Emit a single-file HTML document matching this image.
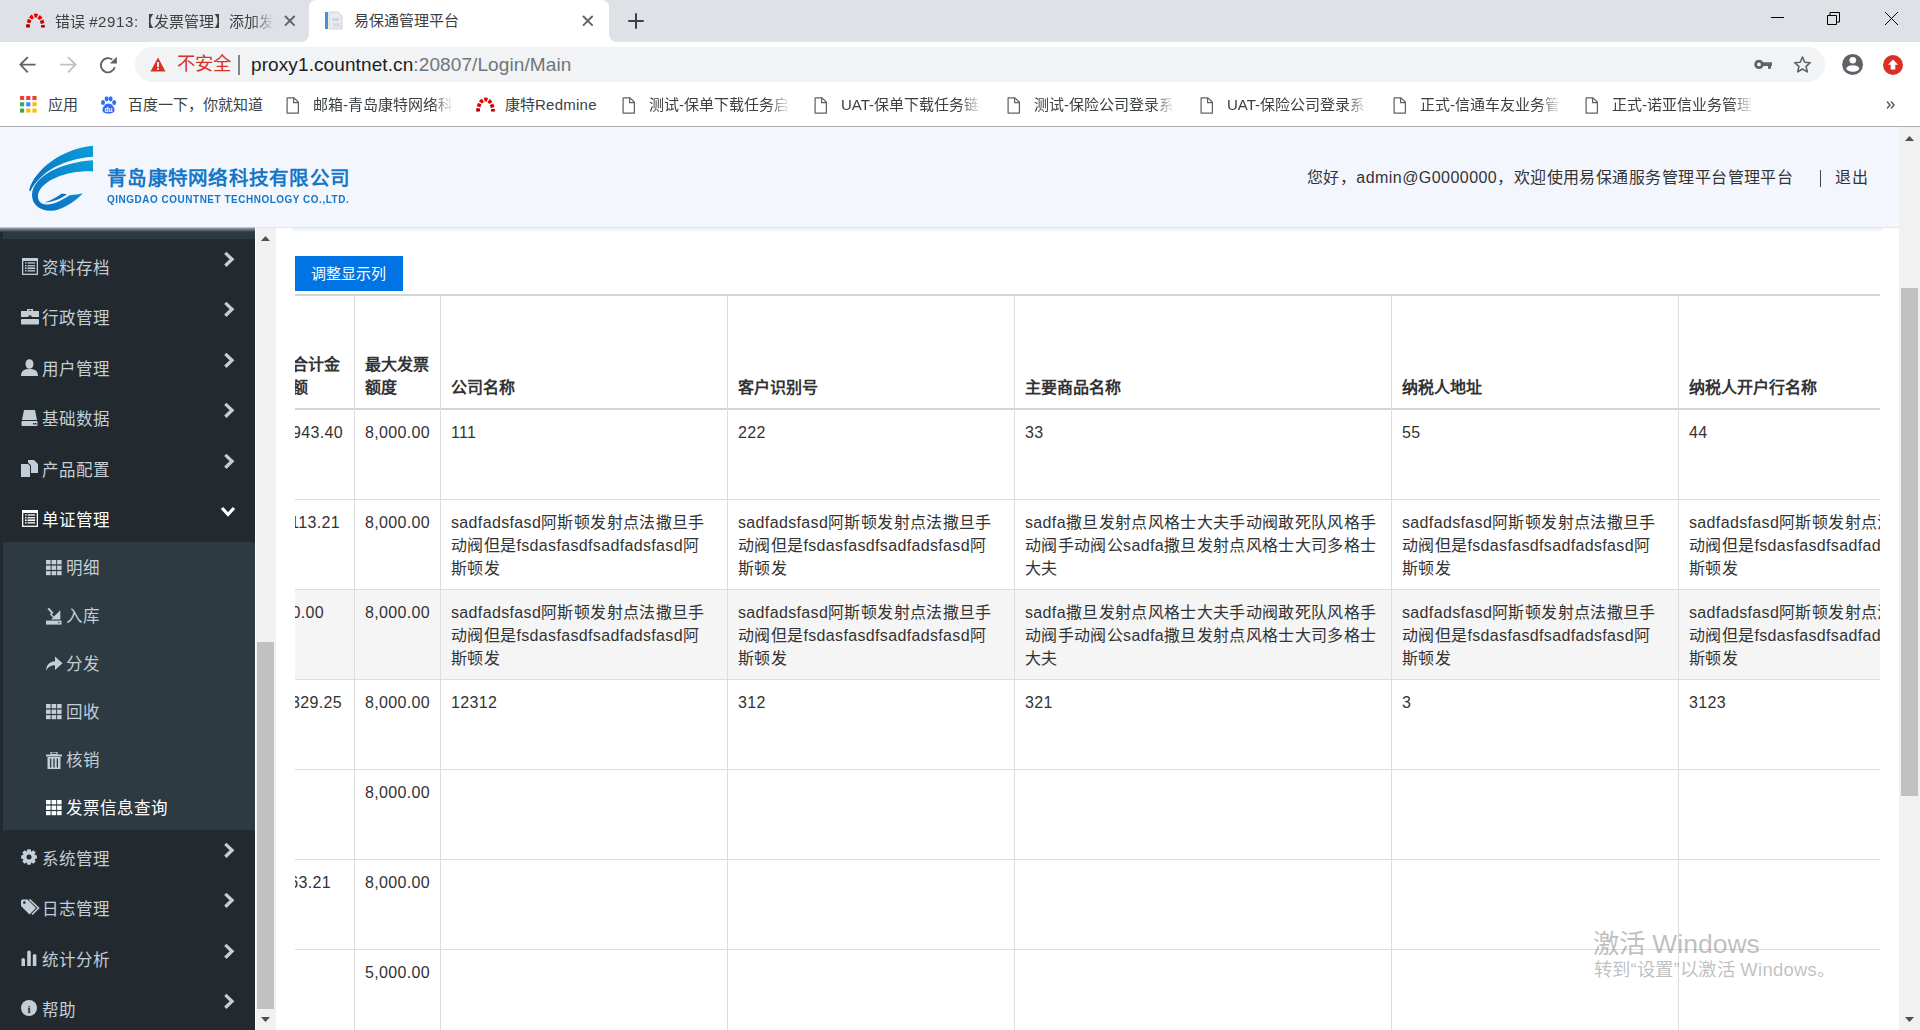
<!DOCTYPE html><html lang="zh-CN"><head><meta charset="utf-8"><style>
*{margin:0;padding:0;box-sizing:border-box}
html,body{width:1920px;height:1030px;overflow:hidden;background:#fff;font-family:"Liberation Sans",sans-serif;position:relative}
.a{position:absolute}
.t{position:absolute;white-space:nowrap;line-height:1}
.fade{-webkit-mask-image:linear-gradient(to right,#000 0,#000 calc(100% - 22px),transparent 100%);mask-image:linear-gradient(to right,#000 0,#000 calc(100% - 22px),transparent 100%);overflow:hidden}
.side{color:#c3ced6;font-size:16px}
.cell{position:absolute;font-size:16px;line-height:23px;color:#333;white-space:nowrap;letter-spacing:0.35px}
.th{position:absolute;font-size:16px;line-height:23px;color:#333;font-weight:bold;white-space:nowrap}
</style></head><body><div class="a" style="left:0;top:0;width:1920px;height:42px;background:#dee1e6"></div><svg class="a" style="left:300px;top:0" width="326" height="42" viewBox="0 0 326 42"><path d="M0 42 Q9 42 9 33 L9 8 Q9 0 17 0 L301 0 Q309 0 309 8 L309 33 Q309 42 318 42 Z" fill="#fff"/></svg><svg class="a" style="left:25px;top:13px" width="21" height="15" viewBox="0 0 21 15"><defs><linearGradient id="rg" x1="0" y1="0" x2="0" y2="1"><stop offset="0" stop-color="#e80000"/><stop offset="0.6" stop-color="#d00000"/><stop offset="1" stop-color="#990000"/></linearGradient></defs><path d="M3 14.5 A7.5 12 0 0 1 18 14.5" fill="none" stroke="url(#rg)" stroke-width="3.8" stroke-dasharray="3.3 1.4"/></svg><div class="t fade" style="left:55px;top:14px;width:219px;font-size:15px;color:#3c4043">错误 <span style="letter-spacing:0.6px">#2913:</span>【发票管理】添加发票</div><svg class="a" style="left:284.2px;top:15.2px" width="11.6" height="11.6"><path d="M1.5 1.5 L10.1 10.1 M10.1 1.5 L1.5 10.1" stroke="#5f6368" stroke-width="1.9" stroke-linecap="round"/></svg><svg class="a" style="left:324px;top:11px" width="20" height="20" viewBox="0 0 20 20"><rect x="1" y="1" width="3" height="17" fill="#4a90d0"/><path d="M5 1 L14 1 L18 5 L18 18 L5 18 Z" fill="#e8ecef" stroke="#c8ccd0" stroke-width="0.8"/><rect x="8" y="7" width="7" height="3" fill="#d0d6dc"/><rect x="9" y="12" width="7" height="4" fill="#d8dde2"/></svg><div class="t" style="left:354px;top:13px;font-size:15px;color:#3c4043">易保通管理平台</div><svg class="a" style="left:582.2px;top:15.2px" width="11.6" height="11.6"><path d="M1.5 1.5 L10.1 10.1 M10.1 1.5 L1.5 10.1" stroke="#5f6368" stroke-width="1.9" stroke-linecap="round"/></svg><svg class="a" style="left:628px;top:13px" width="16" height="16"><path d="M8 1 V15 M1 8 H15" stroke="#3c4043" stroke-width="2" stroke-linecap="round"/></svg><div class="a" style="left:1771px;top:17px;width:13px;height:1px;background:#000"></div><svg class="a" style="left:1827px;top:12px" width="14" height="14"><path d="M0.5 3.5 H9.5 V12.5 H0.5 Z M3 3.5 V0.5 H12.5 V10 H9.5" fill="none" stroke="#000" stroke-width="1"/></svg><svg class="a" style="left:1885px;top:12px" width="13" height="13"><path d="M0 0 L13 13 M13 0 L0 13" stroke="#000" stroke-width="1"/></svg><div class="a" style="left:135px;top:47px;width:1690px;height:35px;background:#f1f3f4;border-radius:17.5px"></div><svg class="a" style="left:18px;top:54px" width="20" height="20" viewBox="0 0 20 20"><path d="M17.6 10.6 H2.6 M9.8 3.1 L2.4 10.6 L9.8 18.3" fill="none" stroke="#5f6368" stroke-width="1.9"/></svg><svg class="a" style="left:58px;top:54px" width="20" height="20" viewBox="0 0 20 20"><path d="M2.3 10.6 H17.3 M10.1 3.1 L17.5 10.6 L10.1 18.3" fill="none" stroke="#bdc1c6" stroke-width="1.9"/></svg><svg class="a" style="left:98px;top:54px" width="20" height="20" viewBox="0 0 20 20"><path d="M16.8 13.3 A7.1 7.1 0 1 1 14.3 5.6" fill="none" stroke="#5f6368" stroke-width="1.9"/><path d="M11.8 9.4 L18.9 9.4 L18.9 2.8 Z" fill="#5f6368"/></svg><svg class="a" style="left:150px;top:57px" width="16" height="15" viewBox="0 0 16 15"><path d="M8 0.5 L15.5 14.5 H0.5 Z" fill="#d93025"/><rect x="7.1" y="5" width="1.8" height="5" fill="#fff"/><rect x="7.1" y="11" width="1.8" height="1.8" fill="#fff"/></svg><div class="t" style="left:177px;top:55px;font-size:18.4px;color:#d93025">不安全</div><div class="a" style="left:238px;top:55px;width:2px;height:20px;background:#80868b"></div><div class="t" style="left:251px;top:55px;font-size:19px;color:#202124;letter-spacing:0.1px">proxy1.countnet.cn<span style="color:#70757a">:20807/Login/Main</span></div><svg class="a" style="left:1753px;top:57px" width="20" height="16" viewBox="0 0 20 16"><circle cx="5.96" cy="7.4" r="3.3" fill="none" stroke="#5f6368" stroke-width="2.8"/><path d="M9 5.3 H18.9 V9.1 H18 V11.8 H15 V9.1 H9 Z" fill="#5f6368"/></svg><svg class="a" style="left:1793px;top:55px" width="19" height="19" viewBox="0 0 24 24"><path d="M12 2.5 L14.8 9.1 L21.9 9.7 L16.5 14.4 L18.1 21.4 L12 17.7 L5.9 21.4 L7.5 14.4 L2.1 9.7 L9.2 9.1 Z" fill="none" stroke="#5f6368" stroke-width="2" stroke-linejoin="round"/></svg><svg class="a" style="left:1842px;top:54px" width="22" height="22" viewBox="0 0 22 22"><circle cx="10.6" cy="10.5" r="10.45" fill="#5f6368"/><circle cx="10.8" cy="6.3" r="3.3" fill="#fff"/><ellipse cx="10.8" cy="14.5" rx="6.4" ry="3.3" fill="#fff"/></svg><svg class="a" style="left:1883px;top:55px" width="20" height="20" viewBox="0 0 20 20"><circle cx="10" cy="10" r="10" fill="#d93025"/><path d="M10 4.5 L15 9.8 H12.3 V14.5 H7.7 V9.8 H5 Z" fill="#fff"/></svg><svg class="a" style="left:20px;top:96px" width="17" height="17"><rect x="0.0" y="0.0" width="4.2" height="4" fill="#ea4335"/><rect x="6.2" y="0.0" width="4.2" height="4" fill="#ea4335"/><rect x="12.4" y="0.0" width="4.2" height="4" fill="#ea4335"/><rect x="0.0" y="6.3" width="4.2" height="4" fill="#34a853"/><rect x="6.2" y="6.3" width="4.2" height="4" fill="#4285f4"/><rect x="12.4" y="6.3" width="4.2" height="4" fill="#fbbc04"/><rect x="0.0" y="12.6" width="4.2" height="4" fill="#34a853"/><rect x="6.2" y="12.6" width="4.2" height="4" fill="#fbbc04"/><rect x="12.4" y="12.6" width="4.2" height="4" fill="#fbbc04"/></svg><div class="t" style="left:48px;top:97px;font-size:15px;color:#3c4043">应用</div><svg class="a" style="left:100px;top:96px" width="17" height="18" viewBox="0 0 17 18"><ellipse cx="3" cy="6.5" rx="2" ry="2.6" fill="#2f6ef0"/><ellipse cx="6.6" cy="2.8" rx="2" ry="2.6" fill="#2f6ef0"/><ellipse cx="10.6" cy="2.8" rx="2" ry="2.6" fill="#2f6ef0"/><ellipse cx="14.2" cy="6.5" rx="2" ry="2.6" fill="#2f6ef0"/><path d="M8.5 7.5 C5 7.5 3 11 2.5 13 C2 16 4 17.5 8.5 17.5 C13 17.5 15 16 14.5 13 C14 11 12 7.5 8.5 7.5Z" fill="#2f6ef0"/><text x="8.5" y="15.6" font-size="6.5" font-family="Liberation Sans" font-weight="bold" fill="#fff" text-anchor="middle">du</text></svg><div class="t" style="left:128px;top:97px;font-size:15px;color:#3c4043">百度一下，你就知道</div><svg class="a" style="left:286px;top:97px" width="14" height="17" viewBox="0 0 14 17"><path d="M1.1 0.9 H8 L12.4 5.3 V16.1 H1.1 Z M7.6 0.9 V5.7 H12.4" fill="none" stroke="#5f6368" stroke-width="1.25" stroke-linejoin="round"/></svg><div class="t fade" style="left:313px;top:97px;width:141px;font-size:15px;color:#3c4043">邮箱-青岛康特网络科技</div><svg class="a" style="left:475px;top:97px" width="21" height="15" viewBox="0 0 21 15"><defs><linearGradient id="rg" x1="0" y1="0" x2="0" y2="1"><stop offset="0" stop-color="#e80000"/><stop offset="0.6" stop-color="#d00000"/><stop offset="1" stop-color="#990000"/></linearGradient></defs><path d="M3 14.5 A7.5 12 0 0 1 18 14.5" fill="none" stroke="url(#rg)" stroke-width="3.8" stroke-dasharray="3.3 1.4"/></svg><div class="t" style="left:505px;top:97px;font-size:15px;color:#3c4043">康特<span style="letter-spacing:0.25px">Redmine</span></div><svg class="a" style="left:622px;top:97px" width="14" height="17" viewBox="0 0 14 17"><path d="M1.1 0.9 H8 L12.4 5.3 V16.1 H1.1 Z M7.6 0.9 V5.7 H12.4" fill="none" stroke="#5f6368" stroke-width="1.25" stroke-linejoin="round"/></svg><div class="t fade" style="left:649px;top:97px;width:141px;font-size:15px;color:#3c4043">测试-保单下载任务启动</div><svg class="a" style="left:814px;top:97px" width="14" height="17" viewBox="0 0 14 17"><path d="M1.1 0.9 H8 L12.4 5.3 V16.1 H1.1 Z M7.6 0.9 V5.7 H12.4" fill="none" stroke="#5f6368" stroke-width="1.25" stroke-linejoin="round"/></svg><div class="t fade" style="left:841px;top:97px;width:141px;font-size:15px;color:#3c4043">UAT-保单下载任务链接</div><svg class="a" style="left:1007px;top:97px" width="14" height="17" viewBox="0 0 14 17"><path d="M1.1 0.9 H8 L12.4 5.3 V16.1 H1.1 Z M7.6 0.9 V5.7 H12.4" fill="none" stroke="#5f6368" stroke-width="1.25" stroke-linejoin="round"/></svg><div class="t fade" style="left:1034px;top:97px;width:141px;font-size:15px;color:#3c4043">测试-保险公司登录系统</div><svg class="a" style="left:1200px;top:97px" width="14" height="17" viewBox="0 0 14 17"><path d="M1.1 0.9 H8 L12.4 5.3 V16.1 H1.1 Z M7.6 0.9 V5.7 H12.4" fill="none" stroke="#5f6368" stroke-width="1.25" stroke-linejoin="round"/></svg><div class="t fade" style="left:1227px;top:97px;width:141px;font-size:15px;color:#3c4043">UAT-保险公司登录系统</div><svg class="a" style="left:1393px;top:97px" width="14" height="17" viewBox="0 0 14 17"><path d="M1.1 0.9 H8 L12.4 5.3 V16.1 H1.1 Z M7.6 0.9 V5.7 H12.4" fill="none" stroke="#5f6368" stroke-width="1.25" stroke-linejoin="round"/></svg><div class="t fade" style="left:1420px;top:97px;width:141px;font-size:15px;color:#3c4043">正式-信通车友业务管理</div><svg class="a" style="left:1585px;top:97px" width="14" height="17" viewBox="0 0 14 17"><path d="M1.1 0.9 H8 L12.4 5.3 V16.1 H1.1 Z M7.6 0.9 V5.7 H12.4" fill="none" stroke="#5f6368" stroke-width="1.25" stroke-linejoin="round"/></svg><div class="t fade" style="left:1612px;top:97px;width:141px;font-size:15px;color:#3c4043">正式-诺亚信业务管理系统</div><svg class="a" style="left:1886px;top:100px" width="10" height="10" viewBox="0 0 10 10"><path d="M1 1.5 L4 5 L1 8.5 M5 1.5 L8 5 L5 8.5" fill="none" stroke="#5f6368" stroke-width="1.6"/></svg><div class="a" style="left:0;top:126px;width:1920px;height:1px;background:#a9acb0"></div><div class="a" style="left:0;top:127px;width:1899px;height:101px;background:#f3f7fd"></div><svg class="a" style="left:20px;top:140px" width="100" height="80" viewBox="0 0 1288 1030"><defs><linearGradient id="lg" x1="0" y1="1" x2="1" y2="0"><stop offset="0" stop-color="#0b6cc0"/><stop offset="1" stop-color="#0a9ed8"/></linearGradient></defs><path d="M940 75 L940 215 C700 230 300 330 130 665 L118 640 C200 380 520 120 940 75 Z" fill="url(#lg)"/><path d="M940 262 L940 405 C640 390 300 500 235 690 C215 780 270 840 360 830 C470 820 560 760 640 712 C700 700 760 700 812 685 C700 800 530 910 400 912 C250 915 150 830 155 700 C170 470 520 290 940 262 Z" fill="url(#lg)"/><path d="M315 805 C400 780 480 730 540 690 L605 698 C520 760 420 800 315 805 Z" fill="#0b74c8"/></svg><div class="t" style="left:107px;top:169px;font-size:19.5px;font-weight:bold;color:#1676c8;letter-spacing:0.27px">青岛康特网络科技有限公司</div><div class="t" style="left:107px;top:194px;font-size:11.5px;font-weight:bold;color:#1676c8;letter-spacing:0.62px;transform:scaleX(0.865);transform-origin:0 0">QINGDAO COUNTNET TECHNOLOGY CO.,LTD.</div><div class="t" style="left:1307px;top:170px;font-size:16px;color:#333;letter-spacing:0.45px">您好，admin@G0000000，欢迎使用易保通服务管理平台管理平台</div><div class="a" style="left:1820px;top:170px;width:1px;height:17px;background:#444"></div><div class="t" style="left:1835px;top:170px;font-size:16px;color:#333;letter-spacing:0.5px">退出</div><div class="a" style="left:0;top:227px;width:1899px;height:1px;background:#e4e8ed"></div><div class="a" style="left:292px;top:228px;width:1590px;height:4px;background:linear-gradient(#eaeff6,#f3f6fb 60%,#fff);border-radius:0 0 6px 6px"></div><div class="a" style="left:0;top:228px;width:255px;height:802px;background:#222a30"></div><div class="a" style="left:3px;top:231px;width:252px;height:8px;background:#2b3940"></div><div class="a" style="left:0;top:227px;width:255px;height:5px;background:linear-gradient(#e0e0e0,#8a9095 30%,#2b3940)"></div><div class="a" style="left:3px;top:542px;width:252px;height:288px;background:#2d3a41"></div><svg class="a" style="left:22px;top:258px" width="16" height="17" viewBox="0 0 16 17"><rect x="0.65" y="0.5" width="14.7" height="15.8" fill="none" stroke="#c3ced6" stroke-width="1.3"/><rect x="0" y="0" width="16" height="3" fill="#c3ced6"/><rect x="3" y="4.3" width="1.6" height="1.3" fill="#c3ced6"/><rect x="5.5" y="4.3" width="7.6" height="1.3" fill="#c3ced6"/><rect x="3" y="7.1" width="1.6" height="1.3" fill="#c3ced6"/><rect x="5.5" y="7.1" width="7.6" height="1.3" fill="#c3ced6"/><rect x="3" y="9.4" width="1.6" height="1.7" fill="#c3ced6"/><rect x="5.5" y="9.4" width="7.6" height="1.7" fill="#c3ced6"/><rect x="3" y="12.2" width="1.6" height="1.3" fill="#c3ced6"/><rect x="5.5" y="12.2" width="7.6" height="1.3" fill="#c3ced6"/></svg><div class="t" style="left:41.5px;top:260px;font-size:16.5px;font-weight:500;color:#c3ced6">资料存档</div><svg class="a" style="left:223px;top:251px" width="12" height="16" viewBox="0 0 12 16"><path d="M2.3 1.9 L9 8.3 L2.3 14.7" fill="none" stroke="#c3ced6" stroke-width="3.3"/></svg><svg class="a" style="left:21px;top:308px" width="18" height="17" viewBox="0 0 18 17"><path d="M6 3 V1 H12 V3 H18 V9 H0 V3 Z M7.5 3 H10.5 V2.2 H7.5 Z" fill="#c3ced6" fill-rule="evenodd"/><rect x="0" y="11" width="18" height="5.5" rx="1" fill="#c3ced6"/><rect x="7.5" y="7.5" width="3" height="3" fill="#222a30"/></svg><div class="t" style="left:41.5px;top:310px;font-size:16.5px;font-weight:500;color:#c3ced6">行政管理</div><svg class="a" style="left:223px;top:301px" width="12" height="16" viewBox="0 0 12 16"><path d="M2.3 1.9 L9 8.3 L2.3 14.7" fill="none" stroke="#c3ced6" stroke-width="3.3"/></svg><svg class="a" style="left:21px;top:359px" width="17" height="17" viewBox="0 0 17 17"><ellipse cx="8.5" cy="5" rx="4" ry="4.8" fill="#c3ced6"/><path d="M0 17 C0 11 4 10 8.5 10 C13 10 17 11 17 17 Z" fill="#c3ced6"/></svg><div class="t" style="left:41.5px;top:361px;font-size:16.5px;font-weight:500;color:#c3ced6">用户管理</div><svg class="a" style="left:223px;top:352px" width="12" height="16" viewBox="0 0 12 16"><path d="M2.3 1.9 L9 8.3 L2.3 14.7" fill="none" stroke="#c3ced6" stroke-width="3.3"/></svg><svg class="a" style="left:21px;top:409px" width="17" height="17" viewBox="0 0 17 17"><path d="M3 1 H14 L16 11 H1 Z" fill="#c3ced6"/><rect x="0.5" y="12" width="16" height="5" rx="1" fill="#c3ced6"/><rect x="12" y="14" width="1.5" height="1.5" fill="#222a30"/><rect x="14" y="14" width="1.5" height="1.5" fill="#222a30"/></svg><div class="t" style="left:41.5px;top:411px;font-size:16.5px;font-weight:500;color:#c3ced6">基础数据</div><svg class="a" style="left:223px;top:402px" width="12" height="16" viewBox="0 0 12 16"><path d="M2.3 1.9 L9 8.3 L2.3 14.7" fill="none" stroke="#c3ced6" stroke-width="3.3"/></svg><svg class="a" style="left:21px;top:460px" width="17" height="17" viewBox="0 0 17 17"><path d="M0 4 H7 L9 6 V17 H0 Z" fill="#c3ced6"/><path d="M7 0 H13 L17 4 V13 H10 V5.5 L7 2.5 Z" fill="#c3ced6"/></svg><div class="t" style="left:41.5px;top:462px;font-size:16.5px;font-weight:500;color:#c3ced6">产品配置</div><svg class="a" style="left:223px;top:453px" width="12" height="16" viewBox="0 0 12 16"><path d="M2.3 1.9 L9 8.3 L2.3 14.7" fill="none" stroke="#c3ced6" stroke-width="3.3"/></svg><svg class="a" style="left:22px;top:510px" width="16" height="17" viewBox="0 0 16 17"><rect x="0.65" y="0.5" width="14.7" height="15.8" fill="none" stroke="#fff" stroke-width="1.3"/><rect x="0" y="0" width="16" height="3" fill="#fff"/><rect x="3" y="4.3" width="1.6" height="1.3" fill="#fff"/><rect x="5.5" y="4.3" width="7.6" height="1.3" fill="#fff"/><rect x="3" y="7.1" width="1.6" height="1.3" fill="#fff"/><rect x="5.5" y="7.1" width="7.6" height="1.3" fill="#fff"/><rect x="3" y="9.4" width="1.6" height="1.7" fill="#fff"/><rect x="5.5" y="9.4" width="7.6" height="1.7" fill="#fff"/><rect x="3" y="12.2" width="1.6" height="1.3" fill="#fff"/><rect x="5.5" y="12.2" width="7.6" height="1.3" fill="#fff"/></svg><div class="t" style="left:41.5px;top:512px;font-size:16.5px;font-weight:500;color:#fff">单证管理</div><svg class="a" style="left:220px;top:506px" width="16" height="12" viewBox="0 0 16 12"><path d="M2 2 L8 8.5 L14 2" fill="none" stroke="#fff" stroke-width="3.2"/></svg><svg class="a" style="left:46px;top:560px" width="16" height="16" viewBox="0 0 16 16"><rect x="0" y="0" width="4.6" height="4.3" fill="#c3ced6"/><rect x="5.6" y="0" width="4.6" height="4.3" fill="#c3ced6"/><rect x="11.1" y="0" width="4.5" height="4.3" fill="#c3ced6"/><rect x="0" y="5.6" width="4.6" height="4.3" fill="#c3ced6"/><rect x="5.6" y="5.6" width="4.6" height="4.3" fill="#c3ced6"/><rect x="11.1" y="5.6" width="4.5" height="4.3" fill="#c3ced6"/><rect x="0" y="11.1" width="4.6" height="4.1" fill="#c3ced6"/><rect x="5.6" y="11.1" width="4.6" height="4.1" fill="#c3ced6"/><rect x="11.1" y="11.1" width="4.5" height="4.1" fill="#c3ced6"/></svg><div class="t" style="left:66px;top:560px;font-size:16.5px;font-weight:500;color:#c3ced6">明细</div><svg class="a" style="left:46px;top:608px" width="16" height="17" viewBox="0 0 16 17"><path d="M1.5 0.8 L3 -0.2 L7.5 4.8 L6 6.2 Z" fill="#c3ced6"/><path d="M5 11.6 L14.3 11.6 L14.3 2.2 Z" fill="#c3ced6"/><path d="M4.8 5.2 L8.5 9 L7.5 10 L3.8 6.2 Z" fill="#c3ced6"/><rect x="0" y="12.6" width="15.5" height="4" fill="#c3ced6"/><rect x="12" y="14.2" width="1.6" height="1" fill="#2d3a41"/></svg><div class="t" style="left:66px;top:608px;font-size:16.5px;font-weight:500;color:#c3ced6">入库</div><svg class="a" style="left:46px;top:656px" width="17" height="15" viewBox="0 0 17 15"><path d="M0 14.5 C0.3 8.5 4 5.5 9 5.2 V0.5 L16.5 7.3 L9 14 V9.3 C5 9.3 2 11 0 14.5 Z" fill="#c3ced6"/></svg><div class="t" style="left:66px;top:656px;font-size:16.5px;font-weight:500;color:#c3ced6">分发</div><svg class="a" style="left:46px;top:704px" width="16" height="16" viewBox="0 0 16 16"><rect x="0" y="0" width="4.6" height="4.3" fill="#c3ced6"/><rect x="5.6" y="0" width="4.6" height="4.3" fill="#c3ced6"/><rect x="11.1" y="0" width="4.5" height="4.3" fill="#c3ced6"/><rect x="0" y="5.6" width="4.6" height="4.3" fill="#c3ced6"/><rect x="5.6" y="5.6" width="4.6" height="4.3" fill="#c3ced6"/><rect x="11.1" y="5.6" width="4.5" height="4.3" fill="#c3ced6"/><rect x="0" y="11.1" width="4.6" height="4.1" fill="#c3ced6"/><rect x="5.6" y="11.1" width="4.6" height="4.1" fill="#c3ced6"/><rect x="11.1" y="11.1" width="4.5" height="4.1" fill="#c3ced6"/></svg><div class="t" style="left:66px;top:704px;font-size:16.5px;font-weight:500;color:#c3ced6">回收</div><svg class="a" style="left:46px;top:752px" width="16" height="17" viewBox="0 0 16 17"><rect x="0" y="2.5" width="16" height="2" fill="#c3ced6"/><rect x="5" y="0" width="6" height="2.5" fill="none" stroke="#c3ced6" stroke-width="1.2"/><path d="M1.5 5 H14.5 V17 H1.5 Z" fill="#c3ced6"/><rect x="4" y="6.5" width="1.3" height="9" fill="#2d3a41"/><rect x="7.35" y="6.5" width="1.3" height="9" fill="#2d3a41"/><rect x="10.7" y="6.5" width="1.3" height="9" fill="#2d3a41"/></svg><div class="t" style="left:66px;top:752px;font-size:16.5px;font-weight:500;color:#c3ced6">核销</div><svg class="a" style="left:46px;top:800px" width="16" height="16" viewBox="0 0 16 16"><rect x="0" y="0" width="4.6" height="4.3" fill="#fff"/><rect x="5.6" y="0" width="4.6" height="4.3" fill="#fff"/><rect x="11.1" y="0" width="4.5" height="4.3" fill="#fff"/><rect x="0" y="5.6" width="4.6" height="4.3" fill="#fff"/><rect x="5.6" y="5.6" width="4.6" height="4.3" fill="#fff"/><rect x="11.1" y="5.6" width="4.5" height="4.3" fill="#fff"/><rect x="0" y="11.1" width="4.6" height="4.1" fill="#fff"/><rect x="5.6" y="11.1" width="4.6" height="4.1" fill="#fff"/><rect x="11.1" y="11.1" width="4.5" height="4.1" fill="#fff"/></svg><div class="t" style="left:66px;top:800px;font-size:16.5px;font-weight:500;color:#fff">发票信息查询</div><svg class="a" style="left:21px;top:849px" width="16" height="16" viewBox="0 0 16 16"><polygon points="13.71,5.85 15.84,6.41 15.84,9.59 13.71,10.15 13.56,10.52 14.67,12.42 12.42,14.67 10.52,13.56 10.15,13.71 9.59,15.84 6.41,15.84 5.85,13.71 5.48,13.56 3.58,14.67 1.33,12.42 2.44,10.52 2.29,10.15 0.16,9.59 0.16,6.41 2.29,5.85 2.44,5.48 1.33,3.58 3.58,1.33 5.48,2.44 5.85,2.29 6.41,0.16 9.59,0.16 10.15,2.29 10.52,2.44 12.42,1.33 14.67,3.58 13.56,5.48" fill="#c3ced6"/><circle cx="8" cy="8" r="2.5" fill="#222a30"/></svg><div class="t" style="left:41.5px;top:851px;font-size:16.5px;font-weight:500;color:#c3ced6">系统管理</div><svg class="a" style="left:223px;top:842px" width="12" height="16" viewBox="0 0 12 16"><path d="M2.3 1.9 L9 8.3 L2.3 14.7" fill="none" stroke="#c3ced6" stroke-width="3.3"/></svg><svg class="a" style="left:21px;top:899px" width="20" height="17" viewBox="0 0 20 17"><path d="M0 1.5 V7 L8.5 15.5 L15 9 L6.5 0.5 H1 Z" fill="#c3ced6"/><circle cx="3.3" cy="3.6" r="1.3" fill="#222a30"/><path d="M8.5 0.5 L17.5 9 L11 15.5" fill="none" stroke="#c3ced6" stroke-width="1.6"/></svg><div class="t" style="left:41.5px;top:901px;font-size:16.5px;font-weight:500;color:#c3ced6">日志管理</div><svg class="a" style="left:223px;top:892px" width="12" height="16" viewBox="0 0 12 16"><path d="M2.3 1.9 L9 8.3 L2.3 14.7" fill="none" stroke="#c3ced6" stroke-width="3.3"/></svg><svg class="a" style="left:21px;top:950px" width="17" height="16" viewBox="0 0 17 16"><path d="M0.5 16 V9.5 Q0.5 8 2.2 8 Q4 8 4 9.5 V16 Z" fill="#c3ced6"/><path d="M6.2 16 V2 Q6.2 0.5 8 0.5 Q9.8 0.5 9.8 2 V16 Z" fill="#c3ced6"/><path d="M11.8 16 V5.5 Q11.8 4 13.6 4 Q15.4 4 15.4 5.5 V16 Z" fill="#c3ced6"/></svg><div class="t" style="left:41.5px;top:952px;font-size:16.5px;font-weight:500;color:#c3ced6">统计分析</div><svg class="a" style="left:223px;top:943px" width="12" height="16" viewBox="0 0 12 16"><path d="M2.3 1.9 L9 8.3 L2.3 14.7" fill="none" stroke="#c3ced6" stroke-width="3.3"/></svg><svg class="a" style="left:21px;top:1000px" width="16" height="16" viewBox="0 0 16 16"><circle cx="8" cy="8" r="8" fill="#c3ced6"/><text x="8" y="12.5" font-size="11" font-weight="bold" font-family="Liberation Serif" fill="#222a30" text-anchor="middle">i</text></svg><div class="t" style="left:41.5px;top:1002px;font-size:16.5px;font-weight:500;color:#c3ced6">帮助</div><svg class="a" style="left:223px;top:993px" width="12" height="16" viewBox="0 0 12 16"><path d="M2.3 1.9 L9 8.3 L2.3 14.7" fill="none" stroke="#c3ced6" stroke-width="3.3"/></svg><div class="a" style="left:255px;top:228px;width:1px;height:802px;background:#fff"></div><div class="a" style="left:256px;top:228px;width:20px;height:802px;background:#f1f1f1"></div><svg class="a" style="left:261px;top:236px" width="9" height="5"><path d="M0 5 L4.5 0 L9 5 Z" fill="#505050"/></svg><div class="a" style="left:257px;top:642px;width:17px;height:367px;background:#c1c1c1"></div><svg class="a" style="left:261px;top:1017px" width="9" height="5"><path d="M0 0 L4.5 5 L9 0 Z" fill="#505050"/></svg><div class="a" style="left:295px;top:256px;width:108px;height:35px;background:#0074e4"></div><div class="t" style="left:311px;top:266px;font-size:15px;color:#fff">调整显示列</div><div class="a" style="left:295px;top:294px;width:1585px;height:2px;background:#d4d4d4"></div><div class="a" style="left:295px;top:408px;width:1585px;height:2px;background:#d4d4d4"></div><div class="a" style="left:295px;top:590px;width:1585px;height:89px;background:#f5f5f5"></div><div class="a" style="left:295px;top:499px;width:1585px;height:1px;background:#ddd"></div><div class="a" style="left:295px;top:589px;width:1585px;height:1px;background:#ddd"></div><div class="a" style="left:295px;top:679px;width:1585px;height:1px;background:#ddd"></div><div class="a" style="left:295px;top:769px;width:1585px;height:1px;background:#ddd"></div><div class="a" style="left:295px;top:859px;width:1585px;height:1px;background:#ddd"></div><div class="a" style="left:295px;top:949px;width:1585px;height:1px;background:#ddd"></div><div class="a" style="left:354px;top:296px;width:1px;height:734px;background:#ddd"></div><div class="a" style="left:440px;top:296px;width:1px;height:734px;background:#ddd"></div><div class="a" style="left:727px;top:296px;width:1px;height:734px;background:#ddd"></div><div class="a" style="left:1014px;top:296px;width:1px;height:734px;background:#ddd"></div><div class="a" style="left:1391px;top:296px;width:1px;height:734px;background:#ddd"></div><div class="a" style="left:1678px;top:296px;width:1px;height:734px;background:#ddd"></div><div class="th" style="left:365px;top:353px">最大发票<br>额度</div><div class="th" style="left:451px;top:376px">公司名称</div><div class="th" style="left:738px;top:376px">客户识别号</div><div class="th" style="left:1025px;top:376px">主要商品名称</div><div class="th" style="left:1402px;top:376px">纳税人地址</div><div class="th" style="left:1689px;top:376px">纳税人开户行名称</div><div class="a" style="left:295px;top:296px;width:59px;height:112px;overflow:hidden"><div class="th" style="left:-3px;top:57px">合计金<br>额</div></div><div class="a" style="left:295px;top:410px;width:59px;height:620px;overflow:hidden"><div class="cell" style="right:11px;top:11px">1,943.40</div><div class="cell" style="right:14px;top:101px">1,113.21</div><div class="cell" style="right:30px;top:191px">10.00</div><div class="cell" style="right:12px;top:281px">1,329.25</div><div class="cell" style="right:23px;top:461px">1,063.21</div></div><div class="cell" style="left:365px;top:421px">8,000.00</div><div class="cell" style="left:365px;top:511px">8,000.00</div><div class="cell" style="left:365px;top:601px">8,000.00</div><div class="cell" style="left:365px;top:691px">8,000.00</div><div class="cell" style="left:365px;top:781px">8,000.00</div><div class="cell" style="left:365px;top:871px">8,000.00</div><div class="cell" style="left:365px;top:961px">5,000.00</div><div class="cell" style="left:451px;top:421px">111</div><div class="cell" style="left:738px;top:421px">222</div><div class="cell" style="left:1025px;top:421px">33</div><div class="cell" style="left:1402px;top:421px">55</div><div class="cell" style="left:1689px;top:421px">44</div><div class="cell" style="left:451px;top:691px">12312</div><div class="cell" style="left:738px;top:691px">312</div><div class="cell" style="left:1025px;top:691px">321</div><div class="cell" style="left:1402px;top:691px">3</div><div class="cell" style="left:1689px;top:691px">3123</div><div class="cell" style="left:451px;top:511px">sadfadsfasd阿斯顿发射点法撒旦手<br>动阀但是fsdasfasdfsadfadsfasd阿<br>斯顿发</div><div class="cell" style="left:738px;top:511px">sadfadsfasd阿斯顿发射点法撒旦手<br>动阀但是fsdasfasdfsadfadsfasd阿<br>斯顿发</div><div class="cell" style="left:1025px;top:511px">sadfa撒旦发射点风格士大夫手动阀敢死队风格手<br>动阀手动阀公sadfa撒旦发射点风格士大司多格士<br>大夫</div><div class="cell" style="left:1402px;top:511px">sadfadsfasd阿斯顿发射点法撒旦手<br>动阀但是fsdasfasdfsadfadsfasd阿<br>斯顿发</div><div class="cell" style="left:1689px;top:511px">sadfadsfasd阿斯顿发射点法撒旦手<br>动阀但是fsdasfasdfsadfadsfasd阿<br>斯顿发</div><div class="cell" style="left:451px;top:601px">sadfadsfasd阿斯顿发射点法撒旦手<br>动阀但是fsdasfasdfsadfadsfasd阿<br>斯顿发</div><div class="cell" style="left:738px;top:601px">sadfadsfasd阿斯顿发射点法撒旦手<br>动阀但是fsdasfasdfsadfadsfasd阿<br>斯顿发</div><div class="cell" style="left:1025px;top:601px">sadfa撒旦发射点风格士大夫手动阀敢死队风格手<br>动阀手动阀公sadfa撒旦发射点风格士大司多格士<br>大夫</div><div class="cell" style="left:1402px;top:601px">sadfadsfasd阿斯顿发射点法撒旦手<br>动阀但是fsdasfasdfsadfadsfasd阿<br>斯顿发</div><div class="cell" style="left:1689px;top:601px">sadfadsfasd阿斯顿发射点法撒旦手<br>动阀但是fsdasfasdfsadfadsfasd阿<br>斯顿发</div><div class="a" style="left:1880px;top:296px;width:19px;height:734px;background:#fff"></div><div class="a" style="left:1899px;top:127px;width:21px;height:903px;background:#f1f1f1"></div><svg class="a" style="left:1905px;top:136px" width="9" height="5"><path d="M0 5 L4.5 0 L9 5 Z" fill="#505050"/></svg><div class="a" style="left:1901px;top:288px;width:17px;height:508px;background:#c1c1c1"></div><svg class="a" style="left:1905px;top:1017px" width="9" height="5"><path d="M0 0 L4.5 5 L9 0 Z" fill="#505050"/></svg><div class="t" style="left:1593px;top:931px;font-size:26.5px;color:rgba(130,130,130,0.5)">激活 Windows</div><div class="t" style="left:1594px;top:961px;font-size:18.4px;letter-spacing:0.3px;color:rgba(130,130,130,0.5)">转到“设置”以激活 Windows。</div></body></html>
